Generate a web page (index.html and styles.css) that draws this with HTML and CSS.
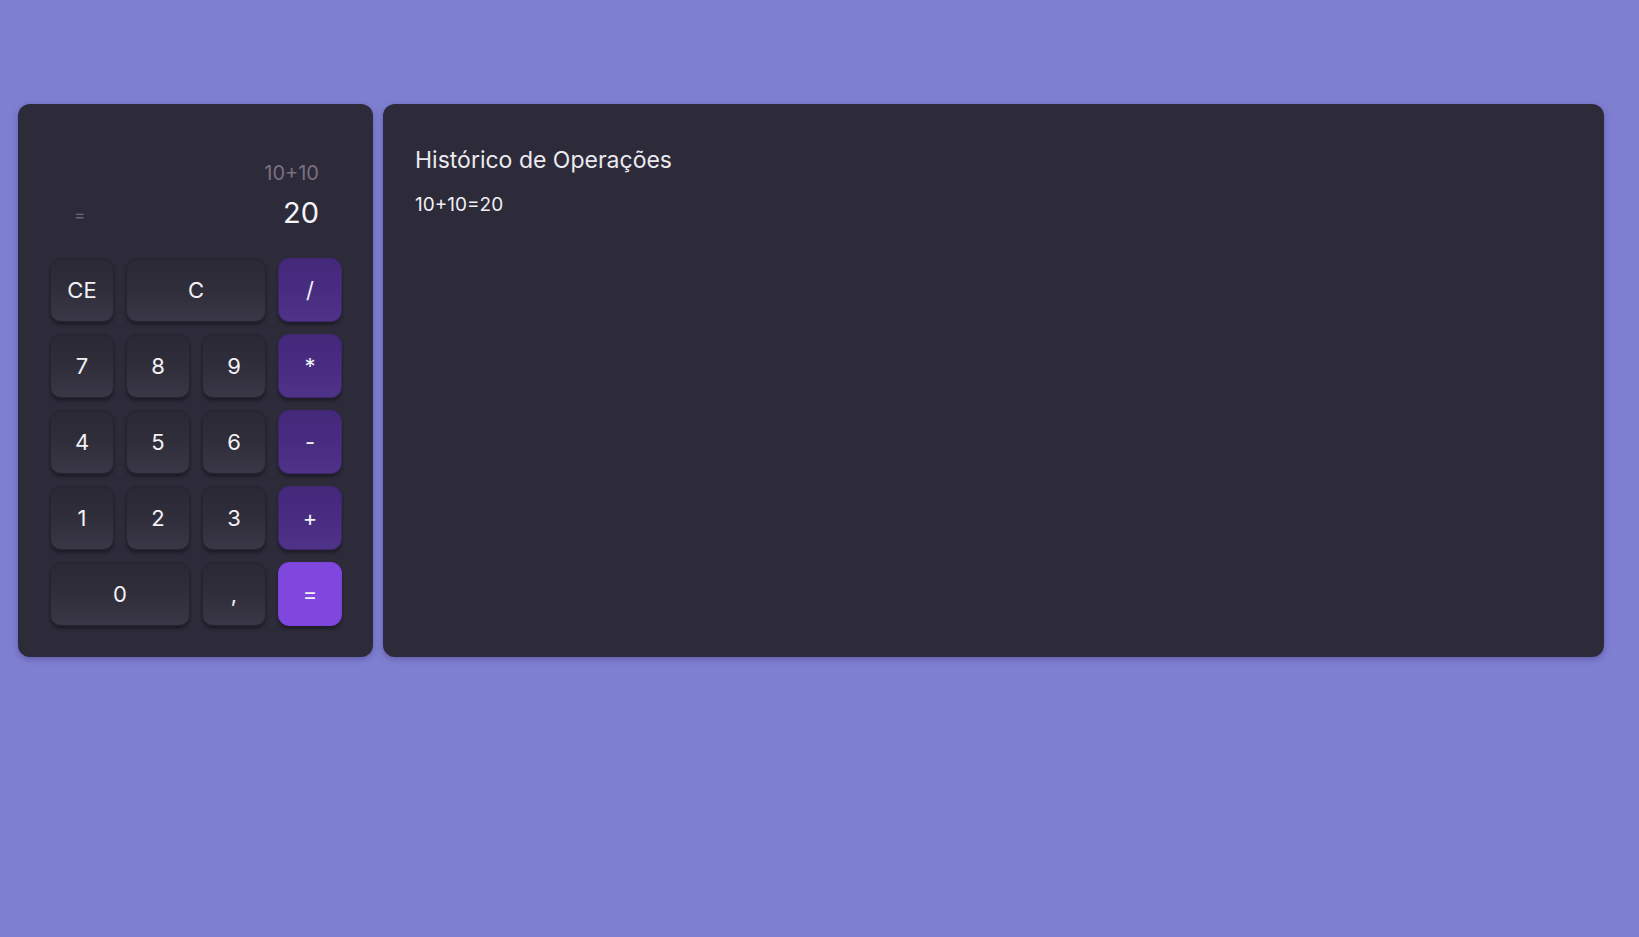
FILE: index.html
```html
<!DOCTYPE html>
<html lang="pt-BR">
<head>
<meta charset="utf-8">
<title>Calculadora</title>
<link rel="stylesheet" href="styles.css">
</head>
<body>
<main class="app">
  <section class="calc">
    <div class="display">
      <div class="prev">10+10</div>
      <div class="current">
        <span class="op">=</span>
        <span class="value">20</span>
      </div>
    </div>
    <div class="keys">
      <button class="key">CE</button>
      <button class="key wide">C</button>
      <button class="key oper">/</button>
      <button class="key">7</button>
      <button class="key">8</button>
      <button class="key">9</button>
      <button class="key oper">*</button>
      <button class="key">4</button>
      <button class="key">5</button>
      <button class="key">6</button>
      <button class="key oper">-</button>
      <button class="key">1</button>
      <button class="key">2</button>
      <button class="key">3</button>
      <button class="key oper">+</button>
      <button class="key wide">0</button>
      <button class="key">,</button>
      <button class="key equals">=</button>
    </div>
  </section>
  <section class="history">
    <h2 class="history-title">Histórico de Operações</h2>
    <ul class="history-list">
      <li class="history-item">10+10=20</li>
    </ul>
  </section>
</main>
</body>
</html>
```

FILE: styles.css
```css
* {
  box-sizing: border-box;
}

html, body {
  margin: 0;
  height: 100%;
}

body {
  background: #7f7fd2;
  font-family: Inter, Roboto, "Liberation Sans", sans-serif;
  color: #f1f0f5;
}

.app {
  display: flex;
  align-items: flex-start;
  gap: 10px;
  padding: 104px 35px 0 18px;
}

.calc,
.history {
  background: #2d2b39;
  border-radius: 12px;
  height: 553px;
  box-shadow: 0 2px 6px rgba(40, 30, 90, 0.35);
}

.calc {
  width: 355px;
  flex: none;
  padding: 57px 31px 32px 32px;
  display: flex;
  flex-direction: column;
}

.display {
  padding: 0 23px 0 24px;
  height: 70px;
}

.prev {
  text-align: right;
  font-size: 20px;
  line-height: 24px;
  color: #7a7081;
}

.current {
  display: flex;
  justify-content: space-between;
  align-items: center;
  margin-top: 10px;
  height: 36px;
}

.op {
  font-size: 17px;
  color: #6b6977;
  padding-top: 4px;
}

.value {
  font-size: 29px;
  line-height: 36px;
  color: #f6f5fa;
}

.keys {
  margin-top: 27px;
  display: grid;
  grid-template-columns: repeat(4, 64px);
  grid-auto-rows: 64px;
  gap: 12px;
}

.key {
  font-family: inherit;
  font-size: 22px;
  color: #f2f1f6;
  border: 1px solid #26242f;
  border-radius: 11px;
  background: linear-gradient(180deg, #2a2834 0%, #2f2d3a 45%, #3a3746 100%);
  box-shadow: 0 3px 3px rgba(18, 16, 26, 0.55);
  padding: 0;
  cursor: pointer;
}

.key.wide {
  grid-column: span 2;
}

.key.oper {
  border-color: #40256f;
  background: linear-gradient(180deg, #44287a 0%, #482c80 50%, #4f3389 100%);
}

.key.equals {
  border-color: #7a43d8;
  background: #8047df;
  font-size: 22px;
}

.history {
  flex: 1;
  padding: 42px 32px 32px;
}

.history-title {
  margin: 0;
  font-size: 23px;
  line-height: 28px;
  font-weight: 400;
  color: #ebeaf0;
}

.history-list {
  list-style: none;
  margin: 19px 0 0;
  padding: 0;
}

.history-item {
  font-size: 19px;
  line-height: 24px;
  color: #f1f0f5;
}
```
